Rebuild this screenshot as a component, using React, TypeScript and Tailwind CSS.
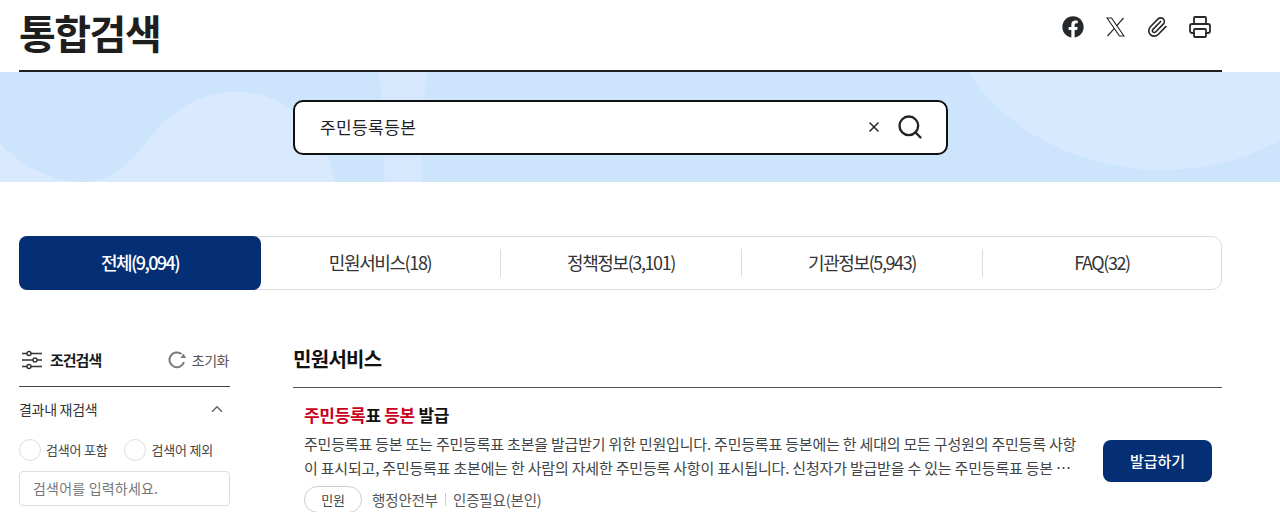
import { ChevronUp, Paperclip, Printer, Search, X } from 'lucide-react'
import { FaFacebook } from 'react-icons/fa'

const tabs = ['민원서비스(18)', '정책정보(3,101)', '기관정보(5,943)', 'FAQ(32)']

function BannerShapes() {
  return (
    <svg className="absolute inset-0 h-full w-full" viewBox="0 0 1280 110" preserveAspectRatio="none" aria-hidden="true">
      <path d="M0 71C25 98 55 110 85 110C120 110 140 75 163 51C185 30 210 20 237 20C290 20 325 60 335 110L0 110Z" fill="#d9eafe" />
      <path d="M378 0L427 0C423 40 421 75 422 110L384 110C386 70 385 35 378 0Z" fill="#d5e8fe" />
      <path d="M969 0C1000 55 1080 98 1162 98C1205 98 1245 88 1280 68L1280 0Z" fill="#d6e9ff" />
    </svg>
  )
}

function XLogo() {
  return (
    <svg width="19" height="20" viewBox="0 0 19 20" fill="none" stroke="#26292c" strokeWidth="1.2" aria-hidden="true">
      <path d="M1 1H5.5L18 19H13.5Z" />
      <path d="M17.5 1L10.6 8.8M8.4 11.3L1.5 19" />
    </svg>
  )
}

function FilterIcon() {
  return (
    <svg width="22" height="20" viewBox="0 0 22 20" fill="none" stroke="#333" strokeWidth="1.4" aria-hidden="true">
      <path d="M1 3.5H6M10 3.5H21M1 10H12M16 10H21M1 16.5H6M10 16.5H21" />
      <circle cx="8" cy="3.5" r="2" />
      <circle cx="14" cy="10" r="2" />
      <circle cx="8" cy="16.5" r="2" />
    </svg>
  )
}

function ResetIcon() {
  return (
    <svg width="18" height="18" viewBox="0 0 18 18" fill="none" aria-hidden="true">
      <path d="M16 11A7.4 7.4 0 1 1 13.5 3" stroke="#777" strokeWidth="2" />
      <path d="M12.5 7L18 7L15.5 2.5Z" fill="#777" />
    </svg>
  )
}

export default function App() {
  return (
    <div className="h-[512px] overflow-hidden bg-white text-[#1a1a1a] font-['Noto_Sans_CJK_KR','Noto_Sans',sans-serif]">
      <header className="mx-[19px] flex h-[72px] w-[1203px] items-start justify-between border-b-2 border-[#1c2126]">
        <h1 className="mt-[5px] text-[40px] leading-[54px] font-bold tracking-[-1.5px] text-[#1e1e1e]">통합검색</h1>
        <div className="mt-[15px] mr-[10px] flex items-center gap-[21px] text-[#26292c]">
          <FaFacebook size={22} />
          <span className="ml-[1px]">
            <XLogo />
          </span>
          <Paperclip size={22} strokeWidth={1.8} />
          <Printer size={24} strokeWidth={1.8} className="-ml-[1px]" />
        </div>
      </header>

      <section className="relative flex h-[110px] items-center overflow-hidden bg-[#cde4fd] pl-[293px]">
        <BannerShapes />
        <div className="relative flex h-[55px] w-[655px] items-center justify-between rounded-[10px] border-2 border-[#111] bg-white pr-[22px] pl-[25px]">
          <span className="text-[17px] tracking-[0.4px] text-[#222]">주민등록등본</span>
          <div className="flex items-center gap-[14px] text-[#222]">
            <X size={16} strokeWidth={2.2} />
            <Search size={28} strokeWidth={2} />
          </div>
        </div>
      </section>

      <nav className="mx-[19px] mt-[54px] grid h-[54px] w-[1203px] grid-cols-[240px_241px_241px_241px_238px] items-center rounded-[10px] border border-[#dcdcdc] text-[18px] tracking-[-1.4px] text-[#333]">
        <div className="-m-px flex h-[54px] items-center justify-center rounded-[8px] bg-[#042f75] pb-[1px] font-medium tracking-[-1.6px] text-white">전체(9,094)</div>
        {tabs.map((tab, i) => (
          <div key={tab} className={`flex h-[28px] items-center justify-center pb-[1px] ${i < 3 ? 'border-r border-[#dcdcdc]' : ''}`}>
            {tab}
          </div>
        ))}
      </nav>

      <div className="mx-[19px] mt-[46px] flex w-[1203px] gap-[63px]">
        <aside className="w-[211px] shrink-0">
          <div className="flex h-[51px] items-center justify-between border-b border-[#444] pb-[2px]">
            <div className="flex items-center gap-[7px] pl-[2px]">
              <FilterIcon />
              <span className="text-[15px] font-bold tracking-[-1px]">조건검색</span>
            </div>
            <div className="flex items-center gap-[6px] pr-[1px] text-[14px] tracking-[-0.5px] text-[#555]">
              <ResetIcon />
              초기화
            </div>
          </div>
          <div className="mt-[10px] flex h-[24px] items-center justify-between pr-[4px]">
            <span className="text-[14px] tracking-[-0.3px] text-[#333]">결과내 재검색</span>
            <ChevronUp size={18} className="text-[#666]" />
          </div>
          <div className="mt-[17px] flex h-[24px] items-center text-[13px] tracking-[-0.2px] text-[#444]">
            <span className="h-[22px] w-[22px] rounded-full border border-[#ddd]" />
            <span className="ml-[5px]">검색어 포함</span>
            <span className="ml-[16px] h-[22px] w-[22px] rounded-full border border-[#ddd]" />
            <span className="ml-[6px]">검색어 제외</span>
          </div>
          <div className="mt-[9px] flex h-[35px] items-center rounded-[4px] border border-[#ddd] pl-[13px] text-[14px] tracking-[0.2px] text-[#777]">
            검색어를 입력하세요.
          </div>
        </aside>

        <main className="min-w-0 flex-1">
          <h2 className="flex h-[52px] items-center border-b border-[#555] pb-[6px] text-[20px] font-bold tracking-[-0.7px] text-[#111]">민원서비스</h2>
          <div className="flex items-start justify-between pt-[15px] pl-[11px]">
            <div>
              <h3 className="text-[17px] leading-[24px] font-bold tracking-[-0.3px] text-[#111]">
                <span className="text-[#c8001e]">주민등록</span>표 <span className="text-[#c8001e]">등본</span> 발급
              </h3>
              <p className="mt-[5px] whitespace-nowrap text-[15px] leading-[24px] tracking-[-0.2px] text-[#444]">
                주민등록표 등본 또는 주민등록표 초본을 발급받기 위한 민원입니다. 주민등록표 등본에는 한 세대의 모든 구성원의 주민등록 사항
                <br />
                이 표시되고, 주민등록표 초본에는 한 사람의 자세한 주민등록 사항이 표시됩니다. 신청자가 발급받을 수 있는 주민등록표 등본 ⋯
              </p>
            </div>
            <button className="mt-[37px] mr-[10px] h-[42px] w-[109px] rounded-[8px] bg-[#042f75] text-[15px] font-medium text-white">발급하기</button>
          </div>
          <div className="mt-[4px] flex items-center pl-[11px] text-[14.5px] tracking-[-0.15px] text-[#555]">
            <span className="flex h-[27px] w-[58px] items-center justify-center rounded-full border border-[#ccc] text-[13px] text-[#444]">민원</span>
            <span className="ml-[10px]">행정안전부</span>
            <span className="mx-[7px] h-[13px] w-px bg-[#ccc]" />
            <span>인증필요(본인)</span>
          </div>
        </main>
      </div>
    </div>
  )
}
